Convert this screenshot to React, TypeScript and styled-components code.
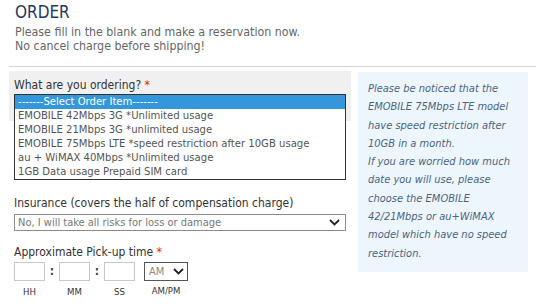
import React from 'react';
import styled, { createGlobalStyle } from 'styled-components';

const orderItems = [
  '-------Select Order Item-------',
  'EMOBILE 42Mbps 3G *Unlimited usage',
  'EMOBILE 21Mbps 3G *unlimited usage',
  'EMOBILE 75Mbps LTE *speed restriction after 10GB usage',
  'au + WiMAX 40Mbps *Unlimited usage',
  '1GB Data usage Prepaid SIM card',
];

const timeParts = ['HH', 'MM', 'SS'];

const Chevron = () => (
  <svg width="11" height="7" viewBox="0 0 11 7">
    <path d="M1 1 L5.5 5.5 L10 1" fill="none" stroke="#222" strokeWidth="1.8" />
  </svg>
);

const App = () => {
  return (
    <Page>
      <GlobalStyle />
      <Header>
        <Title>ORDER</Title>
        <Subtitle>
          Please fill in the blank and make a reservation now.
          <br />
          No cancel charge before shipping!
        </Subtitle>
      </Header>
      <Rule />
      <Main>
        <FormColumn>
          <ActiveField>
            <Label>
              What are you ordering? <Required>*</Required>
            </Label>
            <ListBox role="listbox">
              {orderItems.map((item, i) => (
                <ListItem key={item} $selected={i === 0}>
                  {item}
                </ListItem>
              ))}
            </ListBox>
          </ActiveField>

          <Field>
            <Label>Insurance (covers the half of compensation charge)</Label>
            <SelectBox>
              <SelectText>No, I will take all risks for loss or damage</SelectText>
              <Chevron />
            </SelectBox>
          </Field>

          <TimeField>
            <Label>
              Approximate Pick-up time <Required>*</Required>
            </Label>
            <TimeRow>
              {timeParts.map((part, i) => (
                <React.Fragment key={part}>
                  <TimeUnit>
                    <TimeInput type="text" />
                    <UnitLabel>{part}</UnitLabel>
                  </TimeUnit>
                  {i < timeParts.length - 1 && <Colon>:</Colon>}
                </React.Fragment>
              ))}
              <AmPmUnit>
                <AmPmSelect>
                  <span>AM</span>
                  <Chevron />
                </AmPmSelect>
                <UnitLabel>AM/PM</UnitLabel>
              </AmPmUnit>
            </TimeRow>
          </TimeField>
        </FormColumn>

        <Notice>
          Please be noticed that the EMOBILE 75Mbps LTE model have speed
          restriction after 10GB in a month.
          <br />
          If you are worried how much date you will use, please choose the
          EMOBILE 42/21Mbps or au+WiMAX model which have no speed restriction.
        </Notice>
      </Main>
    </Page>
  );
};

const GlobalStyle = createGlobalStyle`
  body {
    margin: 0;
    background: #fff;
    font-family: "DejaVu Sans Condensed", "DejaVu Sans", sans-serif;
  }
`;

const Page = styled.div`
  width: 536px;
  height: 307px;
  overflow: hidden;
`;

const Header = styled.div`
  padding: 1px 15px 0;
`;

const Title = styled.h1`
  margin: 0;
  font-size: 17px;
  line-height: 22px;
  font-weight: normal;
  color: #1f3a5c;
`;

const Subtitle = styled.p`
  margin: 2px 0 0;
  font-size: 12.3px;
  line-height: 14px;
  color: #666;
`;

const Rule = styled.div`
  margin: 13px 0 0 9px;
  border-top: 1px solid #d3d3d3;
`;

const Main = styled.div`
  display: flex;
  align-items: flex-start;
  gap: 7px;
  margin: 4px 0 0 9px;
`;

const FormColumn = styled.div`
  width: 342px;
  display: flex;
  flex-direction: column;
`;

const Field = styled.div`
  padding: 0 5px;
`;

const ActiveField = styled(Field)`
  height: 50px;
  padding-top: 7px;
  box-sizing: border-box;
  background: #f0f0f0;
  margin-bottom: 75px;
`;

const TimeField = styled(Field)`
  margin-top: 14px;
`;

const Label = styled.div`
  font-size: 12px;
  line-height: 14px;
  color: #333;
  margin-bottom: 2px;
`;

const Required = styled.span`
  color: #e02020;
`;

const ListBox = styled.div`
  position: relative;
  z-index: 1;
  border: 1px solid #333;
  background: #fff;
  width: 332px;
  box-sizing: border-box;
`;

const ListItem = styled.div<{ $selected: boolean }>`
  height: 14px;
  line-height: 14px;
  padding: 0 3px;
  font-size: 11.2px;
  white-space: nowrap;
  color: ${(p) => (p.$selected ? '#fff' : '#555')};
  background: ${(p) => (p.$selected ? '#3497dc' : 'transparent')};
`;

const SelectBox = styled.div`
  display: flex;
  align-items: center;
  justify-content: space-between;
  width: 332px;
  height: 17px;
  box-sizing: border-box;
  margin-top: 4px;
  padding: 0 5px 0 3px;
  border: 1px solid #8a8a8a;
  background: #fff;
`;

const SelectText = styled.span`
  font-size: 11px;
  color: #777;
`;

const TimeRow = styled.div`
  display: flex;
  align-items: flex-start;
  margin-top: 3px;
`;

const TimeUnit = styled.div`
  display: flex;
  flex-direction: column;
  align-items: center;
`;

const TimeInput = styled.input`
  width: 31px;
  height: 19px;
  box-sizing: border-box;
  border: 1px solid #c8c8c8;
  margin: 0;
  padding: 0;
`;

const Colon = styled.span`
  width: 14px;
  text-align: center;
  font-size: 12px;
  font-weight: bold;
  line-height: 19px;
  color: #444;
`;

const UnitLabel = styled.span`
  margin-top: 6px;
  font-size: 9.5px;
  line-height: 10px;
  color: #333;
`;

const AmPmUnit = styled(TimeUnit)`
  margin-left: 9px;
  & > span {
    margin-top: 5px;
  }
`;

const AmPmSelect = styled.div`
  display: flex;
  align-items: center;
  justify-content: space-between;
  width: 44px;
  height: 19px;
  box-sizing: border-box;
  padding: 0 3px 0 4px;
  border: 1px solid #555;
  font-size: 11px;
  color: #888;
`;

const Notice = styled.div`
  width: 170px;
  box-sizing: border-box;
  padding: 8px 8px 9px 10px;
  margin-top: 1px;
  background: #eef6fd;
  font-size: 11px;
  font-style: italic;
  line-height: 18.3px;
  color: #4a6482;
`;

export default App;
